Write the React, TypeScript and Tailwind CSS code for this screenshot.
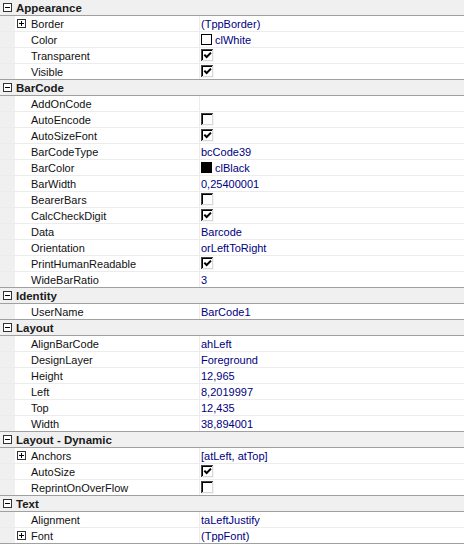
import React from 'react';

type Row = {
  name: string;
  value?: string;
  expand?: boolean;
  check?: boolean;
  swatch?: string;
};

type Group = { title: string; rows: Row[] };

const groups: Group[] = [
  {
    title: 'Appearance',
    rows: [
      { name: 'Border', value: '(TppBorder)', expand: true },
      { name: 'Color', value: 'clWhite', swatch: '#ffffff' },
      { name: 'Transparent', check: true },
      { name: 'Visible', check: true },
    ],
  },
  {
    title: 'BarCode',
    rows: [
      { name: 'AddOnCode', value: '' },
      { name: 'AutoEncode', check: false },
      { name: 'AutoSizeFont', check: true },
      { name: 'BarCodeType', value: 'bcCode39' },
      { name: 'BarColor', value: 'clBlack', swatch: '#000000' },
      { name: 'BarWidth', value: '0,25400001' },
      { name: 'BearerBars', check: false },
      { name: 'CalcCheckDigit', check: true },
      { name: 'Data', value: 'Barcode' },
      { name: 'Orientation', value: 'orLeftToRight' },
      { name: 'PrintHumanReadable', check: true },
      { name: 'WideBarRatio', value: '3' },
    ],
  },
  {
    title: 'Identity',
    rows: [{ name: 'UserName', value: 'BarCode1' }],
  },
  {
    title: 'Layout',
    rows: [
      { name: 'AlignBarCode', value: 'ahLeft' },
      { name: 'DesignLayer', value: 'Foreground' },
      { name: 'Height', value: '12,965' },
      { name: 'Left', value: '8,2019997' },
      { name: 'Top', value: '12,435' },
      { name: 'Width', value: '38,894001' },
    ],
  },
  {
    title: 'Layout - Dynamic',
    rows: [
      { name: 'Anchors', value: '[atLeft, atTop]', expand: true },
      { name: 'AutoSize', check: true },
      { name: 'ReprintOnOverFlow', check: false },
    ],
  },
  {
    title: 'Text',
    rows: [
      { name: 'Alignment', value: 'taLeftJustify' },
      { name: 'Font', value: '(TppFont)', expand: true },
    ],
  },
];

function ToggleBox({ open }: { open: boolean }) {
  return (
    <svg width="9" height="9" viewBox="0 0 9 9" className="shrink-0">
      <rect x="0.5" y="0.5" width="8" height="8" fill="#fff" stroke="#333" />
      <path d="M2 4.5H7" stroke="#000" />
      {!open && <path d="M4.5 2V7" stroke="#000" />}
    </svg>
  );
}

function CheckBox({ checked }: { checked: boolean }) {
  return (
    <svg width="13" height="13" viewBox="0 0 13 13" className="shrink-0">
      <rect x="0" y="0" width="13" height="13" fill="#fff" />
      <path d="M0 0.5H12M0.5 0V12" stroke="#444" />
      <path d="M1 1.5H11M1.5 1V11" stroke="#000" />
      <path d="M0 12.5H13M12.5 0V13" stroke="#f4f4f4" />
      <path d="M1 11.5H12M11.5 1V12" stroke="#d8d8d8" />
      {checked && (
        <path d="M3.3 5.6L5.6 8L10 3.6" fill="none" stroke="#000" strokeWidth="2" />
      )}
    </svg>
  );
}

function Value({ row }: { row: Row }) {
  if (row.check !== undefined) return <CheckBox checked={row.check} />;
  return (
    <div className="flex items-center gap-[3px]">
      {row.swatch && (
        <span
          className="block w-[11px] h-[11px] border border-black shrink-0"
          style={{ backgroundColor: row.swatch }}
        />
      )}
      <span className="text-[#000080] pt-[1px]">{row.value}</span>
    </div>
  );
}

export default function App() {
  return (
    <div
      className="w-[468px] h-[547px] bg-white text-[11px] leading-[15px] text-black overflow-hidden"
      style={{ fontFamily: '"Liberation Sans", Arial, sans-serif' }}
    >
      <div className="w-[464px] bg-[#f0f0f0]">
        {groups.map((g) => (
          <div key={g.title}>
            {/* category header */}
            <div className="flex items-center h-[16px] border-b border-[#a0a0a0]">
              <div className="w-[16px] flex justify-start pl-[3px]">
                <ToggleBox open />
              </div>
              <span className="font-bold text-[11.5px] text-[#1a1a1a] pt-[1px]">{g.title}</span>
            </div>
            {g.rows.map((r, ri) => {
              const last = ri === g.rows.length - 1;
              return (
                <div
                  key={r.name}
                  className={`flex h-[16px] border-b ${
                    last ? 'border-[#a0a0a0]' : 'border-[#ececec]'
                  }`}
                >
                  <div className="w-[15px] bg-[#f0f0f0]" />
                  <div className="w-[184px] bg-white flex items-center">
                    <div className="w-[16px] pl-[2px] flex">
                      {r.expand && <ToggleBox open={false} />}
                    </div>
                    <span className="text-[#111] pt-[1px]">{r.name}</span>
                  </div>
                  <div className="flex-1 bg-white border-l border-[#ececec] pl-[1px] flex items-center">
                    <Value row={r} />
                  </div>
                </div>
              );
            })}
          </div>
        ))}
      </div>
    </div>
  );
}
